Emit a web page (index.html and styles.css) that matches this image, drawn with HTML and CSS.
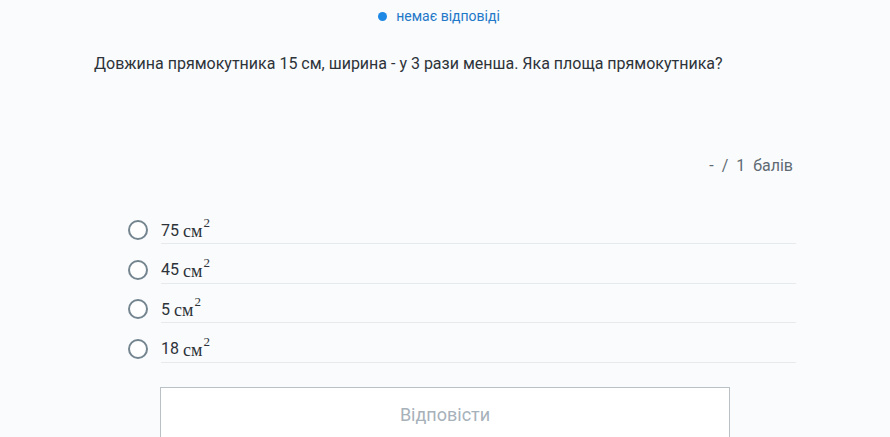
FILE: index.html
```html
<!DOCTYPE html>
<html lang="uk">
<head>
    <meta charset="UTF-8">
    <meta name="viewport" content="width=device-width, initial-scale=1.0">
    <title>Завдання</title>
    <link rel="stylesheet" href="styles.css">
</head>
<body>
    <!-- Статус відповіді -->
    <div class="status">
        <span class="status-dot"></span>
        <span class="status-text">немає відповіді</span>
    </div>

    <div class="task">
        <p class="question">Довжина прямокутника 15 см, ширина - у 3 рази менша. Яка площа прямокутника?</p>

        <div class="score">- / 1 балів</div>

        <!-- Варіанти відповіді -->
        <ul class="options">
            <li class="option">
                <span class="radio"></span>
                <span class="option-label">75 <span class="unit">см<sup>2</sup></span></span>
            </li>
            <li class="option">
                <span class="radio"></span>
                <span class="option-label">45 <span class="unit">см<sup>2</sup></span></span>
            </li>
            <li class="option">
                <span class="radio"></span>
                <span class="option-label">5 <span class="unit">см<sup>2</sup></span></span>
            </li>
            <li class="option">
                <span class="radio"></span>
                <span class="option-label">18 <span class="unit">см<sup>2</sup></span></span>
            </li>
        </ul>

        <button type="button" class="submit-btn">Відповісти</button>
    </div>
</body>
</html>
```

FILE: styles.css
```css
body {
    margin: 0;
    padding: 0;
    font-family: Roboto, "Liberation Sans", Arial, sans-serif;
    background-color: #f9fbfd;
    color: #2d3339;
}
.status {
    display: flex;
    align-items: center;
    justify-content: center;
    gap: 9px;
    height: 32px;
    padding-right: 12px;
}
.status-dot {
    width: 9px;
    height: 9px;
    border-radius: 50%;
    background-color: #1e88e5;
}
.status-text {
    font-size: 14px;
    color: #1f78c8;
}
.task {
    max-width: 702px;
    margin: 0 auto;
}
.question {
    margin: 21px 0 0 0;
    font-size: 16px;
    line-height: 22px;
}
.score {
    margin-top: 80px;
    padding-right: 3px;
    text-align: right;
    font-size: 16px;
    line-height: 22px;
    color: #5f6a73;
    word-spacing: 4px;
}
.options {
    list-style: none;
    margin: 40px 0 0 34px;
    padding: 0;
}
.option {
    display: flex;
    align-items: flex-start;
    margin-bottom: 12.5px;
}
.radio {
    flex: none;
    width: 16px;
    height: 16px;
    border: 2px solid #74858f;
    border-radius: 50%;
    background: #fff;
    margin: 3px 13px 0 0;
}
.option-label {
    flex: 1;
    display: flex;
    align-items: center;
    height: 26px;
    border-bottom: 1px solid #e6eaed;
    font-size: 16px;
    color: #2d3339;
}
.unit {
    font-family: "Liberation Serif", "Times New Roman", serif;
    font-size: 18px;
    margin-left: 4px;
}
.unit sup {
    font-size: 13px;
    position: relative;
    top: -3px;
    margin-left: 1px;
}
.submit-btn {
    display: block;
    width: 570px;
    height: 62px;
    margin: 24px auto 0 auto;
    background: #fff;
    border: 1px solid #b9c0c6;
    font-family: Roboto, "Liberation Sans", Arial, sans-serif;
    font-size: 18px;
    color: #a7b1ba;
    padding: 0 0 6px 0;
}
```
